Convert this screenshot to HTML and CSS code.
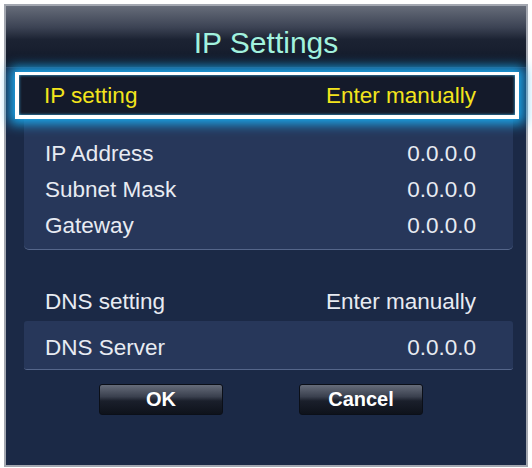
FILE: index.html
```html
<!DOCTYPE html>
<html lang="en">
<head>
    <meta charset="UTF-8">
    <title>IP Settings</title>
    <link rel="stylesheet" href="styles.css">
</head>
<body>

    <div class="dialog">
        <div class="header">IP Settings</div>

        <div class="content">
            <div class="row focus">
                <span>IP setting</span>
                <span>Enter manually</span>
            </div>

            <div class="panel ip-panel">
                <div class="row"><span>IP Address</span><span>0.0.0.0</span></div>
                <div class="row"><span>Subnet Mask</span><span>0.0.0.0</span></div>
                <div class="row"><span>Gateway</span><span>0.0.0.0</span></div>
            </div>

            <div class="row dns-row">
                <span>DNS setting</span>
                <span>Enter manually</span>
            </div>

            <div class="panel dns-panel">
                <div class="row"><span>DNS Server</span><span>0.0.0.0</span></div>
            </div>

            <div class="buttons">
                <button>OK</button>
                <button>Cancel</button>
            </div>
        </div>
    </div>

</body>
</html>
```

FILE: styles.css
```css
body {
    margin: 0;
    padding: 4px;
    background: #ffffff;
    font-family: "Liberation Sans", Arial, sans-serif;
}
.dialog {
    width: 520px;
    height: 459px;
    border: 2px solid #a3a7b0;
    background: #1b2946;
    display: flex;
    flex-direction: column;
}
.header {
    height: 49px;
    padding-top: 12px;
    display: flex;
    align-items: center;
    justify-content: center;
    font-size: 30px;
    color: #a2f2de;
    background: linear-gradient(#666c79, #3c4354 35%, #1c2333 55%, #111828 100%);
    border-bottom: 1px solid #2a3550;
}
.content {
    display: flex;
    flex-direction: column;
}
.row {
    height: 36px;
    display: flex;
    align-items: center;
    justify-content: space-between;
    font-size: 22.5px;
    color: #e8ebf2;
}
.focus {
    position: relative;
    z-index: 1;
    height: 38px;
    margin: 4px 7px 0 9px;
    padding: 2px 39px 0 25px;
    box-sizing: content-box;
    border: 4px solid #ffffff;
    border-top-width: 3px;
    background: #141a2a;
    color: #f3e41c;
    box-shadow: 0 0 11px 5px #1aa9ee, inset 0 0 3px #3fbff5;
}
.panel {
    margin: 0 13px 0 18px;
    background: #27375a;
    border-bottom: 1px solid #55668a;
    border-radius: 0 0 5px 5px;
}
.panel .row {
    padding: 0 37px 0 21px;
}
.ip-panel {
    padding: 17px 0 5px;
}
.dns-row {
    margin-top: 34px;
    padding: 0 50px 0 39px;
}
.dns-panel {
    margin-top: 1px;
    padding: 9px 0 3px;
    border-radius: 3px;
}
.buttons {
    display: flex;
    justify-content: center;
    gap: 76px;
    margin-top: 14px;
    padding-right: 10px;
}
button {
    width: 124px;
    height: 31px;
    border: 1px solid #0b0f18;
    border-radius: 3px;
    background: linear-gradient(#666c7a, #3a404e 40%, #1a1f2b 55%, #0e121b 100%);
    color: #ffffff;
    font-family: "Liberation Sans", Arial, sans-serif;
    font-weight: bold;
    font-size: 20px;
    padding: 0;
}
```
